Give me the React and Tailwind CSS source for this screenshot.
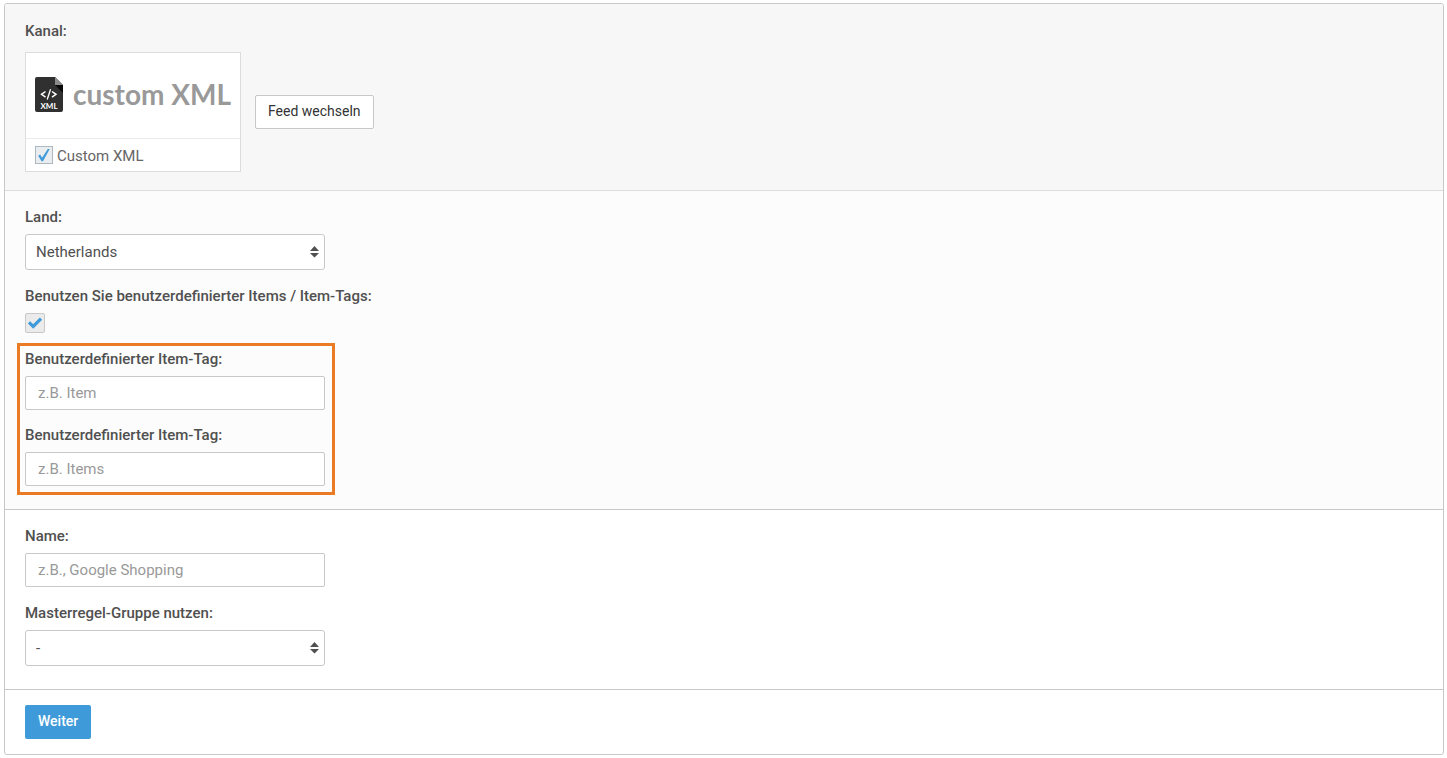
import React, { useState } from 'react';

const XmlFileIcon = () => (
  <svg className="w-7 h-[35px] shrink-0" viewBox="0 0 28 35" aria-hidden="true">
    <path d="M2 0h18l8 8v25a2 2 0 0 1-2 2H2a2 2 0 0 1-2-2V2a2 2 0 0 1 2-2z" fill="#303030" />
    <path d="M20 8h8v8z" fill="#080808" />
    <path d="M20 0l8 8h-8z" fill="#8a8a8a" />
    <g fill="none" stroke="#fff" strokeWidth="1.5">
      <path d="M10.5 14.5L6.5 17.3l4 2.8" />
      <path d="M17 14.5l4 2.8-4 2.8" />
      <path d="M15.6 12.2l-3.4 10.3" strokeWidth="1.3" />
    </g>
    <text x="14" y="32" textAnchor="middle" fill="#fff" fontSize="8" fontWeight="700" fontFamily="Lato, sans-serif">
      XML
    </text>
  </svg>
);

const ThinCheck = () => (
  <svg className="absolute inset-0 w-full h-full pointer-events-none" viewBox="0 0 18 18" aria-hidden="true">
    <path d="M3.2 9.8l1.9-1.2 2 3.2L12.8 3h1.9L8 15.2H6.6z" fill="#3f9ad9" />
  </svg>
);

const BoldCheck = () => (
  <svg className="absolute inset-0 w-full h-full pointer-events-none" viewBox="0 0 20 20" aria-hidden="true">
    <path d="M4 9.4l4.2 4L16 5.6" fill="none" stroke="#3f9ad9" strokeWidth="3.2" />
  </svg>
);

const Field = ({ id, label, children }) => (
  <div className="flex flex-col items-start gap-[7px]">
    <label htmlFor={id} className="font-medium">
      {label}
    </label>
    {children}
  </div>
);

const TextInput = ({ id, placeholder }) => {
  const [value, setValue] = useState('');

  return (
    <input
      type="text"
      id={id}
      value={value}
      onChange={(e) => setValue(e.target.value)}
      placeholder={placeholder}
      className="block w-[300px] max-w-full h-[34px] px-3 bg-white border border-[#c8c8c8] rounded-xs placeholder:text-[#999] focus:outline-none focus:border-[#3f9ad9]"
    />
  );
};

const SelectInput = ({ id, options }) => {
  const [value, setValue] = useState(options[0]);

  return (
    <div className="relative w-[300px] max-w-full">
      <select
        id={id}
        value={value}
        onChange={(e) => setValue(e.target.value)}
        className="block appearance-none w-full h-9 pl-2.5 pr-6 bg-white border border-[#c8c8c8] rounded-[3px] focus:outline-none focus:border-[#3f9ad9]"
      >
        {options.map((option) => (
          <option key={option}>{option}</option>
        ))}
      </select>
      <svg className="absolute right-1.5 top-3 w-[9px] h-3 pointer-events-none" viewBox="0 0 9 12" aria-hidden="true">
        <path d="M0 5l4.5-5L9 5zM0 7h9l-4.5 4.5z" fill="#505050" />
      </svg>
    </div>
  );
};

const App = () => {
  const [customXml, setCustomXml] = useState(true);
  const [customItems, setCustomItems] = useState(true);

  return (
    <form
      onSubmit={(e) => e.preventDefault()}
      className="m-[3px] ml-1 border border-[#c8c8c8] rounded-[3px] overflow-hidden bg-white font-['Roboto',sans-serif] text-[15px] leading-5 text-[#505050]"
    >
      {/* Channel */}
      <section className="px-5 pt-[17px] pb-[18px] bg-[#f7f7f7] border-b border-[#dcdcdc]">
        <h2 className="font-medium mb-[11px]">Kanal:</h2>
        <div className="flex flex-wrap items-center gap-3.5">
          <div className="w-[216px] h-[120px] flex flex-col bg-white border border-[#dcdcdc]">
            <div className="flex-1 flex items-center gap-2.5 px-[9px] pb-0.5 border-b border-[#ebebeb]">
              <XmlFileIcon />
              <span className="pb-0.5 font-['Lato',sans-serif] font-bold text-[28px] leading-9 text-[#999] whitespace-nowrap">
                custom XML
              </span>
            </div>
            <div className="flex items-center gap-1 h-8 px-[9px]">
              <span className="relative w-[18px] h-[18px]">
                <input
                  type="checkbox"
                  id="custom-xml"
                  checked={customXml}
                  onChange={(e) => setCustomXml(e.target.checked)}
                  className="block appearance-none w-full h-full bg-[#e9edf0] border border-[#adb8c0]"
                />
                {customXml && <ThinCheck />}
              </span>
              <label htmlFor="custom-xml" className="pt-0.5 text-[#666]">Custom XML</label>
            </div>
          </div>
          <button type="button" className="h-[34px] px-3 pb-0.5 bg-white border border-[#c8c8c8] rounded-xs text-sm text-[#333]">
            Feed wechseln
          </button>
        </div>
      </section>

      {/* Country and item tags */}
      <section className="flex flex-col gap-4 px-5 pt-4 pb-[23px] bg-[#fcfcfc] border-b border-[#c8c8c8]">
        <Field id="country" label="Land:">
          <SelectInput id="country" options={['Netherlands', 'Deutschland', 'Belgien']} />
        </Field>
        <Field id="custom-items" label="Benutzen Sie benutzerdefinierter Items / Item-Tags:">
          <span className="relative w-5 h-5">
            <input
              type="checkbox"
              id="custom-items"
              checked={customItems}
              onChange={(e) => setCustomItems(e.target.checked)}
              className="block appearance-none w-full h-full bg-[#ebebeb] border border-[#c8c8c8] rounded-xs"
            />
            {customItems && <BoldCheck />}
          </span>
        </Field>
        <div className="relative self-start flex flex-col gap-[15px]">
          <Field id="item-tag" label="Benutzerdefinierter Item-Tag:">
            <TextInput id="item-tag" placeholder="z.B. Item" />
          </Field>
          <Field id="items-tag" label="Benutzerdefinierter Item-Tag:">
            <TextInput id="items-tag" placeholder="z.B. Items" />
          </Field>
          <div className="absolute -left-2 -right-2.5 -top-1.5 -bottom-[9px] border-3 border-[#ea7a24] pointer-events-none" />
        </div>
      </section>

      {/* Name and rule group */}
      <section className="flex flex-col gap-4 px-5 pt-4 pb-[23px] border-b border-[#c8c8c8]">
        <Field id="name" label="Name:">
          <TextInput id="name" placeholder="z.B., Google Shopping" />
        </Field>
        <Field id="rule-group" label="Masterregel-Gruppe nutzen:">
          <SelectInput id="rule-group" options={['-']} />
        </Field>
      </section>

      <div className="px-5 py-[15px]">
        <button type="submit" className="block h-[34px] px-[13px] pb-0.5 bg-[#3f9ad9] rounded-xs text-sm font-medium text-white">
          Weiter
        </button>
      </div>
    </form>
  );
};

export default App;
